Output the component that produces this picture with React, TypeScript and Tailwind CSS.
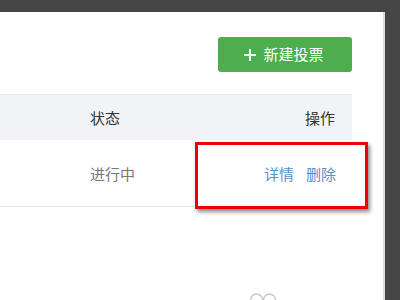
import React from 'react';

const font = { fontFamily: '"Noto Sans CJK SC", "Microsoft YaHei", sans-serif' };

export default function App() {
  return (
    <div className="relative w-[400px] h-[300px] bg-[#464646] flex flex-col overflow-hidden" style={font}>
      {/* window top bar */}
      <div className="h-[12px] bg-[#464646]" />

      <div className="flex flex-1">
        {/* page panel */}
        <div className="w-[385px] bg-white border-r-[2px] border-[#dcdde2] flex flex-col pr-[31px]">
          <div className="flex justify-end pt-[25px]">
            <button className="w-[134px] h-[35px] rounded-[3px] bg-[#4cae4f] text-white text-[15px] flex items-center justify-center gap-[7px] pr-[2px]">
              <svg width="12" height="12" viewBox="0 0 12 12" stroke="white" strokeWidth="2">
                <path d="M6 0v12M0 6h12" />
              </svg>
              <span>新建投票</span>
            </button>
          </div>

          {/* table */}
          <div className="mt-[22px]">
            <div className="h-[46px] bg-[#f2f3f7] border-t border-[#e6e7ec] flex items-center text-[15px] text-[#333] pt-[2px]">
              <div className="w-[90px]" />
              <div className="flex-1">状态</div>
              <div className="pr-[17px]">操作</div>
            </div>
            <div className="h-[67px] border-b border-[#e6e7ec] flex items-center text-[15px] pt-[2px]">
              <div className="w-[90px]" />
              <div className="flex-1 text-[#777]">进行中</div>
              <div className="pr-[16px] flex gap-[12px] text-[#5a8fc4]">
                <span>详情</span>
                <span>删除</span>
              </div>
            </div>
          </div>

          {/* partial icon at bottom */}
          <div className="flex-1 relative">
            <svg className="absolute left-[249px] bottom-[-6px]" width="28" height="14" viewBox="0 0 28 14" fill="none" stroke="#c8c8c8" strokeWidth="1.5">
              <circle cx="7.5" cy="8" r="6" />
              <circle cx="20.5" cy="8" r="6" />
            </svg>
          </div>
        </div>
        <div className="flex-1 bg-[#464646]" />
      </div>

      {/* annotation box */}
      <div className="absolute left-[195px] top-[142px] w-[173px] h-[67px] border-[3px] border-[#f00000] shadow-[2px_3px_4px_rgba(0,0,0,0.45)]" />
    </div>
  );
}
